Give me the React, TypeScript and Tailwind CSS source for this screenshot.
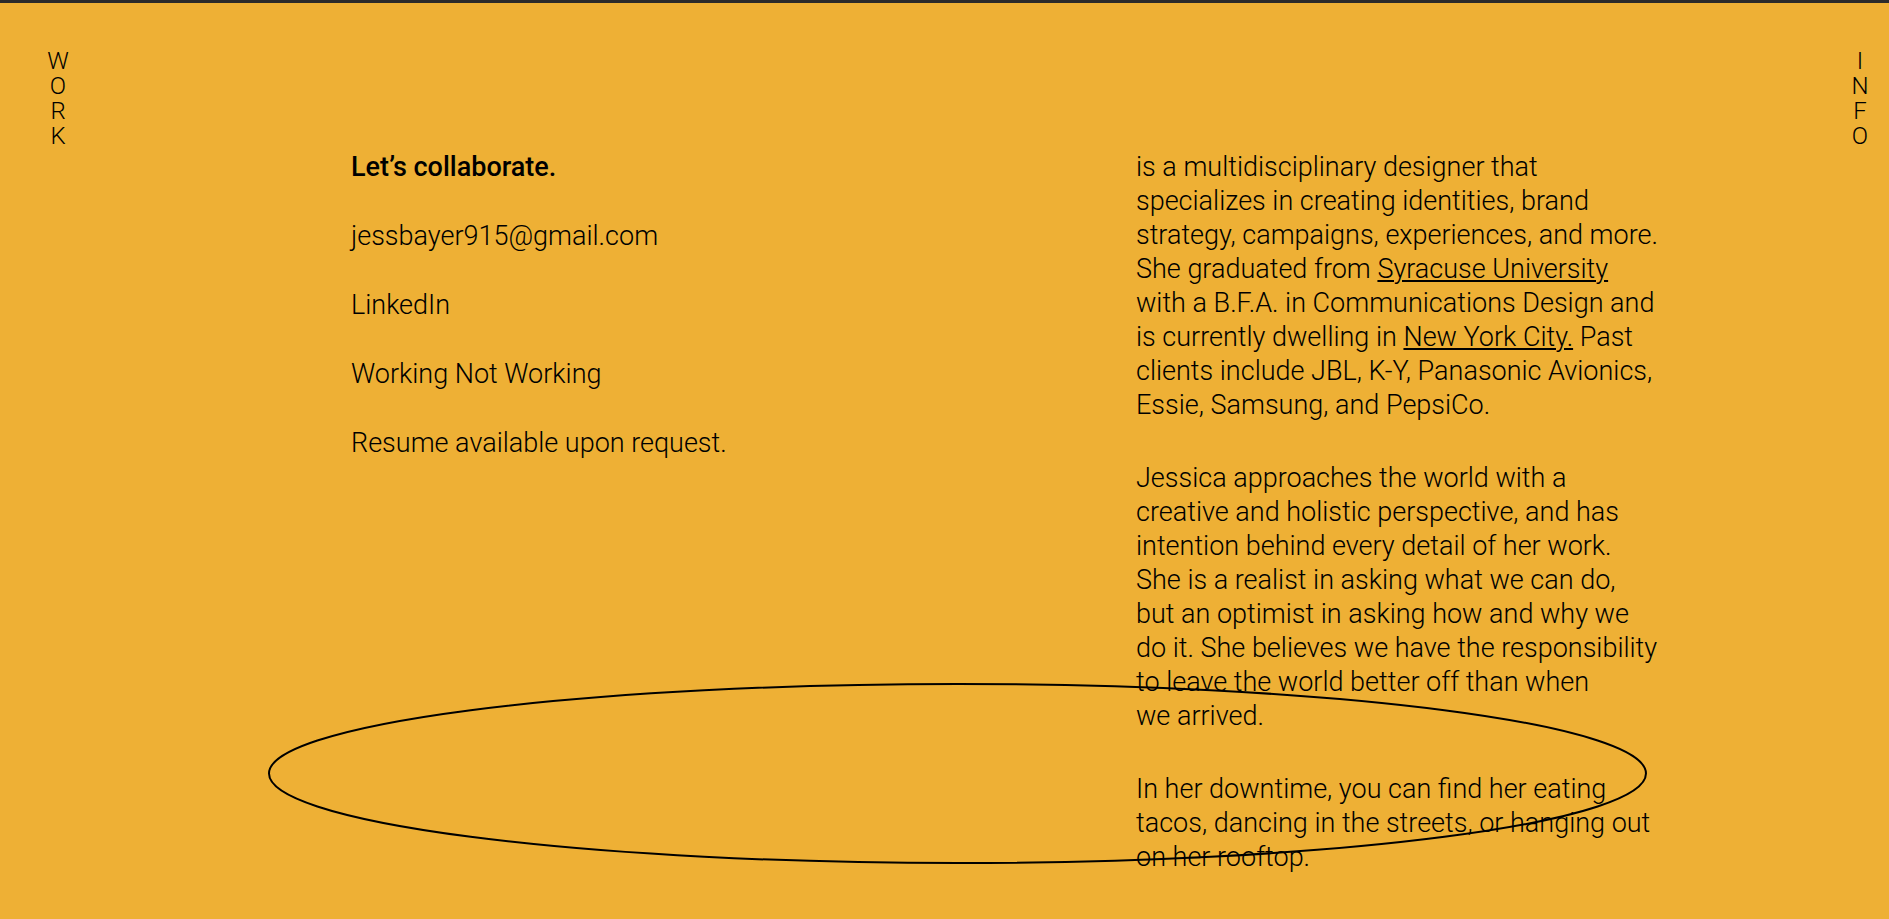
import { Fragment } from "react";

const contacts = [
  { label: "jessbayer915@gmail.com", href: "mailto:jessbayer915@gmail.com" },
  { label: "LinkedIn", href: "#linkedin" },
  { label: "Working Not Working", href: "#working-not-working" },
];

function VerticalLink({ word, href }: { word: string; href: string }) {
  return (
    <a
      href={href}
      aria-label={word}
      className="flex w-5 flex-col items-center text-2xl leading-[25px]"
    >
      {word.split("").map((letter, i) => (
        <span key={i}>{letter}</span>
      ))}
    </a>
  );
}

function Lines({ lines }: { lines: string[] }) {
  return (
    <p>
      {lines.map((line, i) => (
        <Fragment key={line}>
          {i > 0 && <br />}
          {line}
        </Fragment>
      ))}
    </p>
  );
}

export default function App() {
  return (
    <div className="relative min-h-screen overflow-hidden border-t-3 border-[#2b2b2b] bg-[#eeb035] font-['Roboto','Liberation_Sans',sans-serif] font-light text-black">
      <div className="grid grid-cols-[351fr_785fr_753fr]">
        <nav className="pt-[46px] pl-12">
          <VerticalLink word="WORK" href="#work" />
        </nav>

        <section className="flex flex-col items-start gap-[35px] pt-[147px] text-[27px] leading-[34px] whitespace-nowrap">
          <h1 className="font-medium">Let’s collaborate.</h1>
          {contacts.map((contact) => (
            <a key={contact.label} href={contact.href}>
              {contact.label}
            </a>
          ))}
          <p>Resume available upon request.</p>
        </section>

        <div className="flex items-start justify-between">
          <section className="flex flex-col gap-[39px] pt-[147px] text-[27px] leading-[34px] whitespace-nowrap">
            <p>
              is a multidisciplinary designer that
              <br />
              specializes in creating identities, brand
              <br />
              strategy, campaigns, experiences, and more.
              <br />
              She graduated from{" "}
              <a href="#syracuse" className="underline">
                Syracuse University
              </a>
              <br />
              with a B.F.A. in Communications Design and
              <br />
              is currently dwelling in{" "}
              <a href="#nyc" className="underline">
                New York City.
              </a>{" "}
              Past
              <br />
              clients include JBL, K-Y, Panasonic Avionics,
              <br />
              Essie, Samsung, and PepsiCo.
            </p>
            <Lines
              lines={[
                "Jessica approaches the world with a",
                "creative and holistic perspective, and has",
                "intention behind every detail of her work.",
                "She is a realist in asking what we can do,",
                "but an optimist in asking how and why we",
                "do it. She believes we have the responsibility",
                "to leave the world better off than when",
                "we arrived.",
              ]}
            />
            <Lines
              lines={[
                "In her downtime, you can find her eating",
                "tacos, dancing in the streets, or hanging out",
                "on her rooftop.",
              ]}
            />
          </section>
          <nav className="pt-[46px] pr-[19px]">
            <VerticalLink word="INFO" href="#info" />
          </nav>
        </div>
      </div>

      <svg
        aria-hidden="true"
        viewBox="0 0 1378 181"
        preserveAspectRatio="none"
        className="pointer-events-none absolute top-[680px] left-[14.2%] h-[181px] w-[73%]"
      >
        <ellipse
          cx="689"
          cy="90.5"
          rx="688"
          ry="89.5"
          fill="none"
          stroke="black"
          strokeWidth="2"
        />
      </svg>
    </div>
  );
}
